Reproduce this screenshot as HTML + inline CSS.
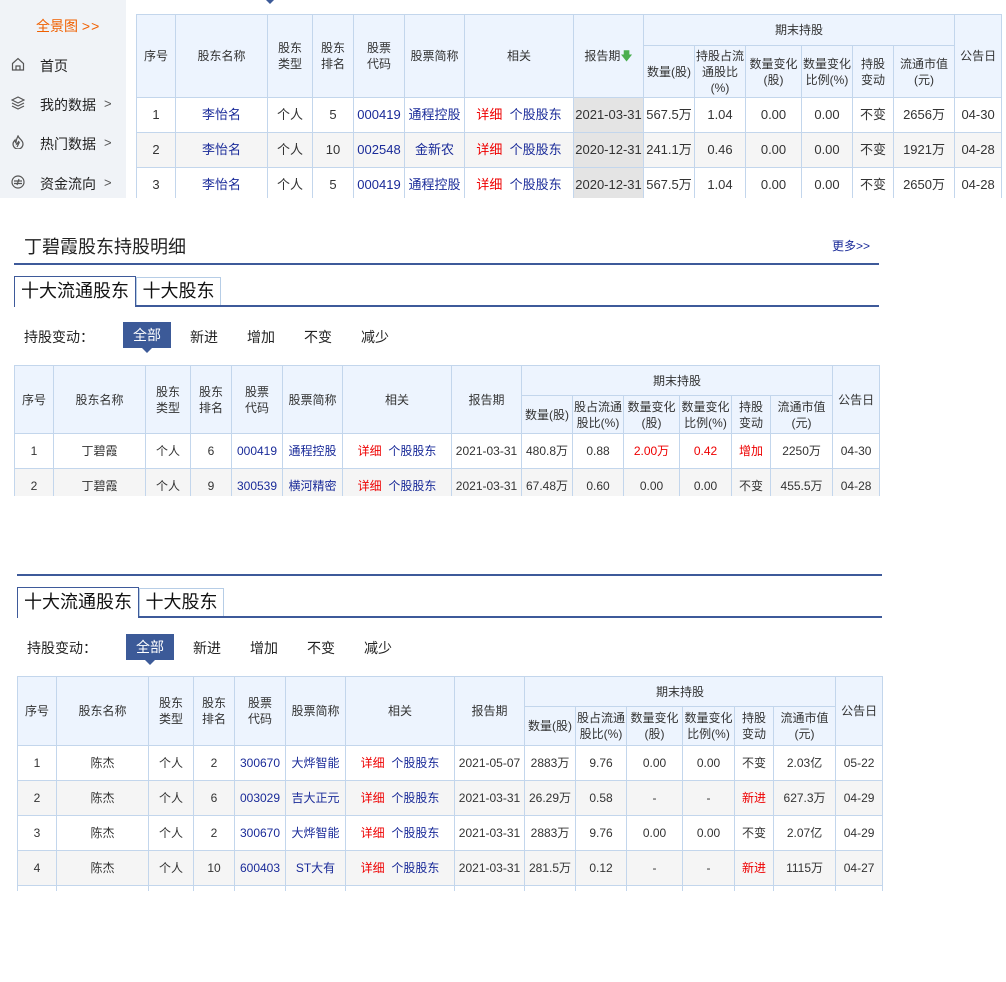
<!DOCTYPE html>
<html><head><meta charset="utf-8">
<style>
*{margin:0;padding:0;box-sizing:border-box}
body{width:1006px;height:982px;background:#fff;position:relative;overflow:hidden;font-family:"Liberation Sans","Noto Sans CJK SC",sans-serif;font-size:12px;color:#333}
.abs{position:absolute}
.side{left:0;top:0;width:126px;height:198px;background:#f0f3f7}
.side .it{position:absolute;left:40px;font-size:14px;color:#222}
.side .ic{position:absolute;left:11px;width:14px;height:14px}
.side .ar{position:absolute;left:104px;font-size:13px;color:#555}
table{border-collapse:collapse;table-layout:fixed;position:absolute}
td,th{border:1px solid #c3d6ec;text-align:center;font-weight:normal;font-size:12px;line-height:16px;padding:0;overflow:hidden;white-space:nowrap}
th{background:#edf4fe;color:#333;white-space:normal}
td{color:#333}
.t1 td{font-size:13px}
tr.g td{background:#f5f5f5}
.b{color:#1a2b99}.r{color:#e00}
.wrap{position:absolute;overflow:hidden}
.rp{background:#e4e4e4!important}
.h2{font-size:18px;color:#222}
.line{position:absolute;height:2px;background:#3e5a9a}
.tab1{position:absolute;border:1px solid #3e5a9a;border-bottom:none;background:#fff;font-size:18px;color:#111;text-align:center;line-height:28px}
.tab2{position:absolute;border:1px solid #b6cde6;border-bottom:none;font-size:18px;color:#111;text-align:center;line-height:26px}
.flt{position:absolute;font-size:14px;color:#222}
.btn{position:absolute;width:48px;height:26px;background:#3c5a98;color:#fff;font-size:14px;text-align:center;line-height:26px}
.btn:after{content:"";position:absolute;left:19px;top:26px;border:5px solid transparent;border-top:5px solid #3c5a98}
</style></head><body>

<div class="abs side">
<div class="abs" style="left:36px;top:16px;font-size:14px;color:#f06000">全景图 <b style="font-weight:normal;letter-spacing:1px">&gt;&gt;</b></div>
<svg class="ic" style="top:57px" viewBox="0 0 14 14" fill="none" stroke="#555" stroke-width="1.2"><path d="M1.5 6.5L7 1.5l5.5 5V13h-11z"/><path d="M5 13V9h4v4"/></svg>
<div class="it" style="top:56px">首页</div>
<svg class="ic" style="top:96px" viewBox="0 0 14 14" fill="none" stroke="#555" stroke-width="1.2"><path d="M7 1l6 3-6 3-6-3z"/><path d="M1 7l6 3 6-3"/><path d="M1 10l6 3 6-3"/></svg>
<div class="it" style="top:95px">我的数据</div><div class="ar" style="top:96px">&gt;</div>
<svg class="ic" style="top:135px" viewBox="0 0 14 14" fill="none" stroke="#555" stroke-width="1.2"><path d="M7 1C8 4 12 5 12 9a5 5 0 0 1-10 0c0-2 1-3 2-4 0 2 1 3 1 3C5 5 6 3 7 1z"/><path d="M6 12l2-4-2 1 2-3"/></svg>
<div class="it" style="top:134px">热门数据</div><div class="ar" style="top:135px">&gt;</div>
<svg class="ic" style="top:175px" viewBox="0 0 14 14" fill="none" stroke="#555" stroke-width="1.2"><circle cx="7" cy="7" r="6"/><path d="M3 6h8M3 8.5h8M8 4L6 10"/></svg>
<div class="it" style="top:174px">资金流向</div><div class="ar" style="top:175px">&gt;</div>
</div>
<div class="abs" style="left:266px;top:0;border:4px solid transparent;border-top:4px solid #3c5a98"></div>

<div class="wrap" style="left:136px;top:14px;width:866px;height:184px">
<table class="t1" style="left:0;top:0;width:865px">
<colgroup><col width="39"><col width="92"><col width="45"><col width="41"><col width="51"><col width="60"><col width="109"><col width="70"><col width="51"><col width="51"><col width="56"><col width="51"><col width="41"><col width="61"><col width="47"></colgroup>
<tr style="height:31px"><th rowspan="2">序号</th><th rowspan="2">股东名称</th><th rowspan="2">股东<br>类型</th><th rowspan="2">股东<br>排名</th><th rowspan="2">股票<br>代码</th><th rowspan="2">股票简称</th><th rowspan="2">相关</th><th rowspan="2">报告期<span style="color:#4caf50">&#x1F847;</span></th><th colspan="6">期末持股</th><th rowspan="2">公告日</th></tr>
<tr style="height:52px"><th>数量(股)</th><th>持股占流<br>通股比<br>(%)</th><th>数量变化<br>(股)</th><th>数量变化<br>比例(%)</th><th>持股<br>变动</th><th>流通市值<br>(元)</th></tr>
<tr style="height:35px"><td>1</td><td class="b">李怡名</td><td>个人</td><td>5</td><td class="b">000419</td><td class="b">通程控股</td><td><span class="r">详细</span>&nbsp; <span class="b">个股股东</span></td><td class="rp">2021-03-31</td><td>567.5万</td><td>1.04</td><td>0.00</td><td>0.00</td><td>不变</td><td>2656万</td><td>04-30</td></tr>
<tr class="g" style="height:35px"><td>2</td><td class="b">李怡名</td><td>个人</td><td>10</td><td class="b">002548</td><td class="b">金新农</td><td><span class="r">详细</span>&nbsp; <span class="b">个股股东</span></td><td class="rp">2020-12-31</td><td>241.1万</td><td>0.46</td><td>0.00</td><td>0.00</td><td>不变</td><td>1921万</td><td>04-28</td></tr>
<tr style="height:35px"><td>3</td><td class="b">李怡名</td><td>个人</td><td>5</td><td class="b">000419</td><td class="b">通程控股</td><td><span class="r">详细</span>&nbsp; <span class="b">个股股东</span></td><td class="rp">2020-12-31</td><td>567.5万</td><td>1.04</td><td>0.00</td><td>0.00</td><td>不变</td><td>2650万</td><td>04-28</td></tr>
</table></div>

<div class="abs h2" style="left:24px;top:233px">丁碧霞股东持股明细</div>
<div class="abs" style="left:832px;top:237px;font-size:12px;color:#1a2b99">更多&gt;&gt;</div>
<div class="line" style="left:14px;top:263px;width:865px"></div>
<div class="tab2" style="left:136px;top:277px;width:85px;height:29px">十大股东</div>
<div class="line" style="left:136px;top:305px;width:743px"></div>
<div class="tab1" style="left:14px;top:276px;width:122px;height:31px">十大流通股东</div>
<div class="flt" style="left:24px;top:327px">持股变动：</div>
<div class="btn" style="left:123px;top:322px">全部</div>
<div class="flt" style="left:190px;top:327px">新进</div><div class="flt" style="left:247px;top:327px">增加</div><div class="flt" style="left:304px;top:327px">不变</div><div class="flt" style="left:361px;top:327px">减少</div>

<div class="wrap" style="left:14px;top:365px;width:866px;height:131px">
<table style="left:0;top:0;width:865px">
<colgroup><col width="39"><col width="92"><col width="45"><col width="41"><col width="51"><col width="60"><col width="109"><col width="70"><col width="51"><col width="51"><col width="56"><col width="52"><col width="39"><col width="62"><col width="47"></colgroup>
<tr style="height:30px"><th rowspan="2">序号</th><th rowspan="2">股东名称</th><th rowspan="2">股东<br>类型</th><th rowspan="2">股东<br>排名</th><th rowspan="2">股票<br>代码</th><th rowspan="2">股票简称</th><th rowspan="2">相关</th><th rowspan="2">报告期</th><th colspan="6">期末持股</th><th rowspan="2">公告日</th></tr>
<tr style="height:38px"><th>数量(股)</th><th>股占流通<br>股比(%)</th><th>数量变化<br>(股)</th><th>数量变化<br>比例(%)</th><th>持股<br>变动</th><th>流通市值<br>(元)</th></tr>
<tr style="height:35px"><td>1</td><td>丁碧霞</td><td>个人</td><td>6</td><td class="b">000419</td><td class="b">通程控股</td><td><span class="r">详细</span>&nbsp; <span class="b">个股股东</span></td><td>2021-03-31</td><td>480.8万</td><td>0.88</td><td class="r">2.00万</td><td class="r">0.42</td><td class="r">增加</td><td>2250万</td><td>04-30</td></tr>
<tr class="g" style="height:35px"><td>2</td><td>丁碧霞</td><td>个人</td><td>9</td><td class="b">300539</td><td class="b">横河精密</td><td><span class="r">详细</span>&nbsp; <span class="b">个股股东</span></td><td>2021-03-31</td><td>67.48万</td><td>0.60</td><td>0.00</td><td>0.00</td><td>不变</td><td>455.5万</td><td>04-28</td></tr>
</table></div>

<div class="line" style="left:17px;top:574px;width:865px"></div>
<div class="tab2" style="left:139px;top:588px;width:85px;height:29px">十大股东</div>
<div class="line" style="left:139px;top:616px;width:743px"></div>
<div class="tab1" style="left:17px;top:587px;width:122px;height:31px">十大流通股东</div>
<div class="flt" style="left:27px;top:638px">持股变动：</div>
<div class="btn" style="left:126px;top:634px">全部</div>
<div class="flt" style="left:193px;top:638px">新进</div><div class="flt" style="left:250px;top:638px">增加</div><div class="flt" style="left:307px;top:638px">不变</div><div class="flt" style="left:364px;top:638px">减少</div>

<div class="wrap" style="left:17px;top:676px;width:866px;height:215px">
<table style="left:0;top:0;width:865px">
<colgroup><col width="39"><col width="92"><col width="45"><col width="41"><col width="51"><col width="60"><col width="109"><col width="70"><col width="51"><col width="51"><col width="56"><col width="52"><col width="39"><col width="62"><col width="47"></colgroup>
<tr style="height:30px"><th rowspan="2">序号</th><th rowspan="2">股东名称</th><th rowspan="2">股东<br>类型</th><th rowspan="2">股东<br>排名</th><th rowspan="2">股票<br>代码</th><th rowspan="2">股票简称</th><th rowspan="2">相关</th><th rowspan="2">报告期</th><th colspan="6">期末持股</th><th rowspan="2">公告日</th></tr>
<tr style="height:39px"><th>数量(股)</th><th>股占流通<br>股比(%)</th><th>数量变化<br>(股)</th><th>数量变化<br>比例(%)</th><th>持股<br>变动</th><th>流通市值<br>(元)</th></tr>
<tr style="height:35px"><td>1</td><td>陈杰</td><td>个人</td><td>2</td><td class="b">300670</td><td class="b">大烨智能</td><td><span class="r">详细</span>&nbsp; <span class="b">个股股东</span></td><td>2021-05-07</td><td>2883万</td><td>9.76</td><td>0.00</td><td>0.00</td><td>不变</td><td>2.03亿</td><td>05-22</td></tr>
<tr class="g" style="height:35px"><td>2</td><td>陈杰</td><td>个人</td><td>6</td><td class="b">003029</td><td class="b">吉大正元</td><td><span class="r">详细</span>&nbsp; <span class="b">个股股东</span></td><td>2021-03-31</td><td>26.29万</td><td>0.58</td><td>-</td><td>-</td><td class="r">新进</td><td>627.3万</td><td>04-29</td></tr>
<tr style="height:35px"><td>3</td><td>陈杰</td><td>个人</td><td>2</td><td class="b">300670</td><td class="b">大烨智能</td><td><span class="r">详细</span>&nbsp; <span class="b">个股股东</span></td><td>2021-03-31</td><td>2883万</td><td>9.76</td><td>0.00</td><td>0.00</td><td>不变</td><td>2.07亿</td><td>04-29</td></tr>
<tr class="g" style="height:35px"><td>4</td><td>陈杰</td><td>个人</td><td>10</td><td class="b">600403</td><td class="b">ST大有</td><td><span class="r">详细</span>&nbsp; <span class="b">个股股东</span></td><td>2021-03-31</td><td>281.5万</td><td>0.12</td><td>-</td><td>-</td><td class="r">新进</td><td>1115万</td><td>04-27</td></tr>
<tr style="height:35px"><td></td><td></td><td></td><td></td><td></td><td></td><td></td><td></td><td></td><td></td><td></td><td></td><td></td><td></td><td></td></tr>
</table></div>
</body></html>
